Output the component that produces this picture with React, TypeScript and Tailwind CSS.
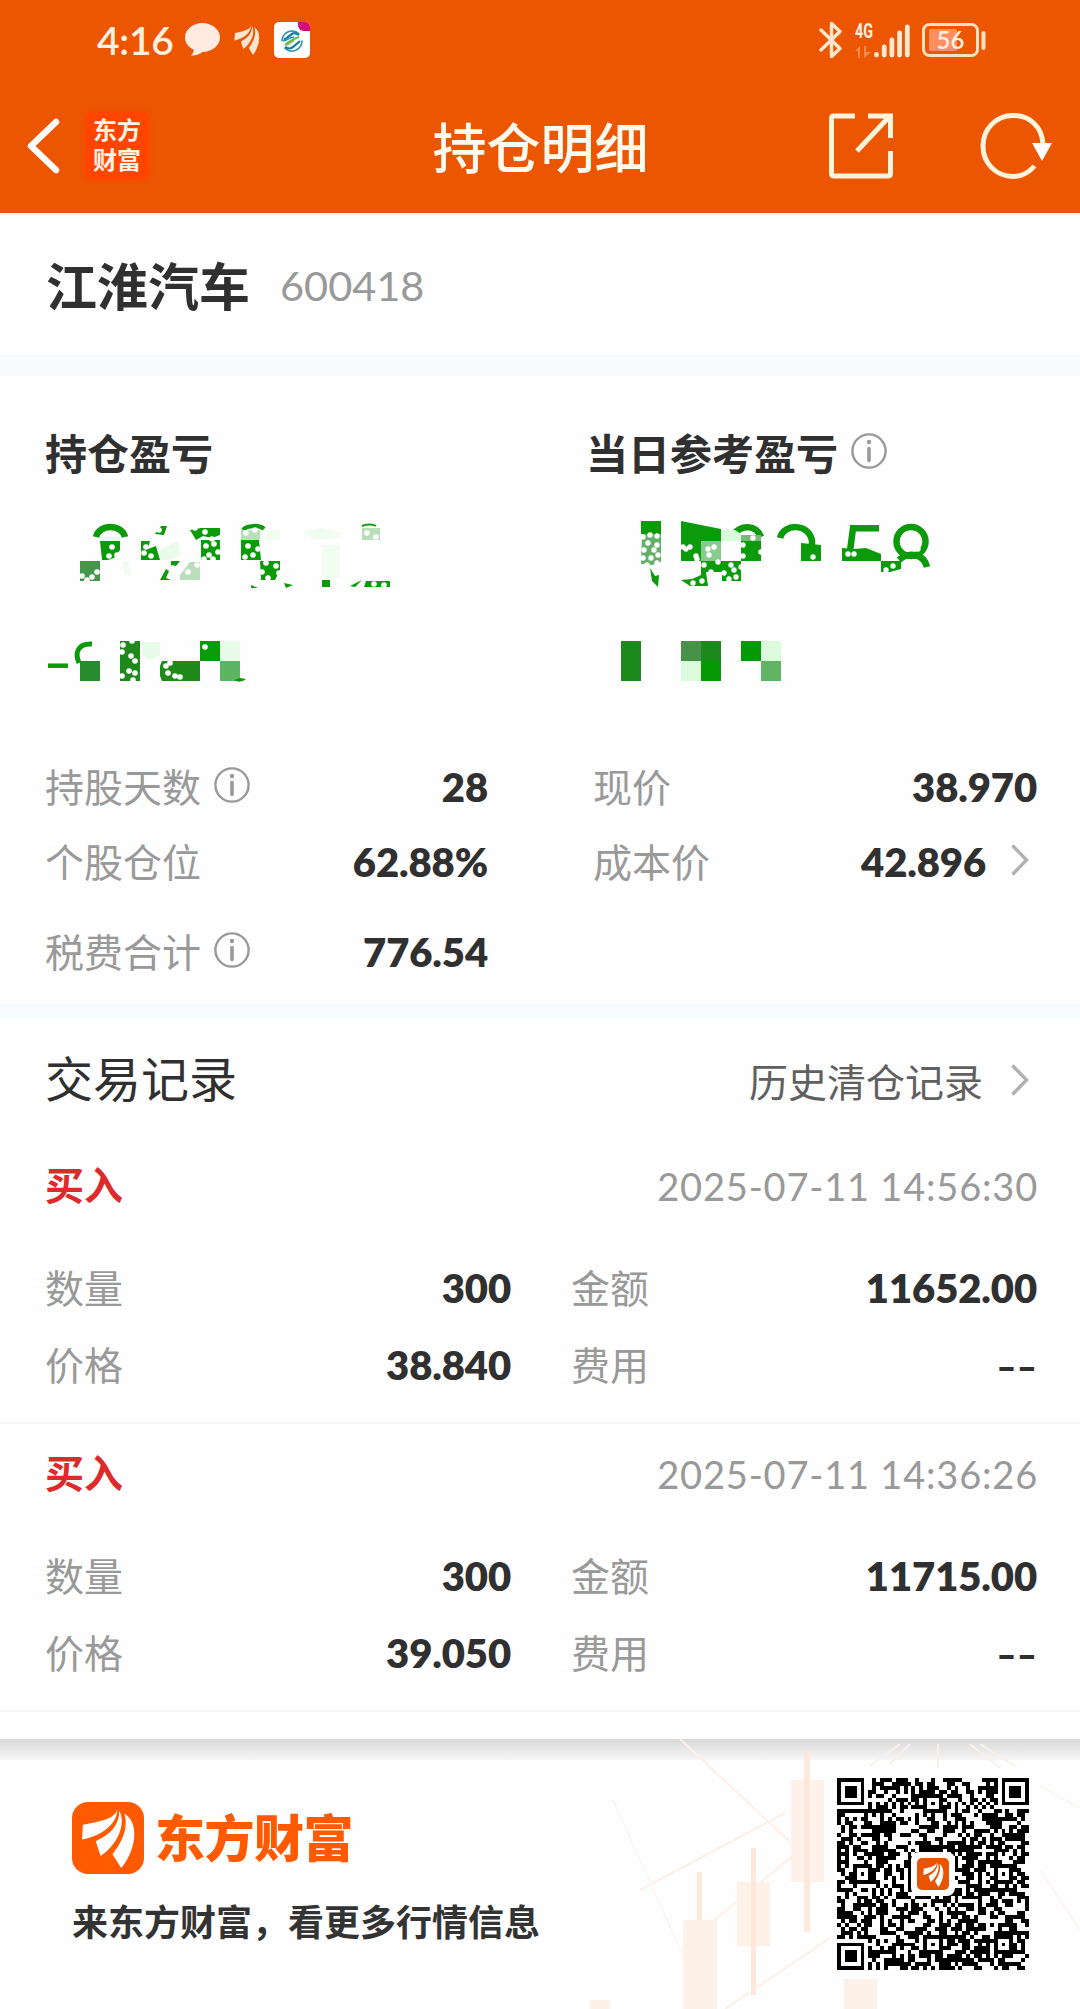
const N = 49;

function buildModules(): boolean[][] {
  let seed = 20250711;
  const rand = () => {
    seed = (seed * 1664525 + 1013904223) >>> 0;
    return seed / 4294967296;
  };
  const m: boolean[][] = Array.from({ length: N }, () => Array.from({ length: N }, () => rand() < 0.53));
  const ring = (cx: number, cy: number, size: number) => {
    for (let y = cy - size; y <= cy + size; y++)
      for (let x = cx - size; x <= cx + size; x++) {
        if (x < 0 || y < 0 || x >= N || y >= N) continue;
        const d = Math.max(Math.abs(x - cx), Math.abs(y - cy));
        m[y][x] = size === 4 ? d !== 4 && d !== 2 : d !== 1;
      }
  };
  for (let i = 8; i < N - 8; i++) {
    m[6][i] = i % 2 === 0;
    m[i][6] = i % 2 === 0;
  }
  for (const [x, y] of [[24, 6], [6, 24], [42, 24], [24, 42], [42, 42]]) ring(x, y, 2);
  for (const [x, y] of [[3, 3], [45, 3], [3, 45]]) ring(x, y, 4);
  return m;
}

const modules = buildModules();
const qrPath = modules
  .map((row, y) => row.map((on, x) => (on ? `M${x} ${y}h1v1h-1z` : "")).join(""))
  .join("");

function Mark({ className, fill }: { className: string; fill: string }) {
  return (
    <svg viewBox="0 0 56 64" className={className} fill={fill} preserveAspectRatio="none">
      <path d="M37 0C35 9 25 13 2 17L1 33C22 29 37 16 37 0Z" />
      <path d="M39 2C39 17 31 27 15 35L20 51C35 41 47 18 39 2Z" />
      <path d="M44 5C49 21 41 37 32 49L41 64C56 45 60 15 44 5Z" />
    </svg>
  );
}

function Info() {
  return (
    <svg viewBox="0 0 36 36" className="size-9 shrink-0" fill="none" stroke="#999">
      <circle cx="18" cy="18" r="16.6" strokeWidth="2.4" />
      <path d="M18 15.5V27.5" strokeWidth="3.6" strokeLinecap="round" />
      <circle cx="18" cy="9" r="2.2" fill="#999" stroke="none" />
    </svg>
  );
}

function Chevron() {
  return (
    <svg viewBox="0 0 18 32" className="h-8 w-[18px] shrink-0" fill="none" stroke="#b0b0b0" strokeWidth="3.4">
      <path d="M1.5 1.5L15.5 16L1.5 30.5" />
    </svg>
  );
}

function StatusBar() {
  return (
    <div className="flex h-20 items-center justify-between pl-[97px] pr-[94px]">
      <div className="flex items-center">
        <span className="w-[79px] font-['Lato',sans-serif] text-[39px] font-semibold leading-none tracking-[-0.3px] text-[#fff0e0]">4:16</span>
        <svg viewBox="0 0 35 34" className="ml-[9px] h-[34px] w-[35px]" fill="#ffebe0">
          <path d="M17.500 0C27 0 35 6.500 35 14.500S27 29 17.500 29C15 31.500 10 33 5.500 32.500C8 31 9 28.500 8.500 26.500C3 24 0 19.500 0 14.500C0 6.500 8 0 17.500 0Z" />
        </svg>
        <Mark className="ml-[14px] h-[30px] w-[26px]" fill="#ffe5cf" />
        <div className="relative ml-[14px] flex h-9 w-9 items-center justify-center overflow-hidden rounded-[5px] bg-white">
          <svg viewBox="0 0 24 24" className="mt-0.5 size-6" fill="none" strokeWidth="2.2">
            <circle cx="12" cy="12" r="10" stroke="#2b91ad" strokeWidth="1.500" strokeDasharray="24 7" />
            <path d="M4 11L12 5C14 3.500 16 4 19 6" stroke="#167fa8" />
            <path d="M5 16L9 13C12 11 15 9 19 8M5 16C8 15 11 13 14 11" stroke="#79b84a" />
            <path d="M5 18C9 20 10 20 13 18L20 12" stroke="#167fa8" />
            <path d="M3 12C8 12 9 8 14 8" stroke="#2b91ad" strokeWidth="1.500" />
          </svg>
          <div className="absolute right-0 top-0 h-[9px] w-3 rounded-bl-md bg-[#d80a7c]" />
        </div>
      </div>
      <div className="flex items-center">
        <svg viewBox="0 0 24 38" className="h-[38px] w-6" fill="none" stroke="#ffe8cf" strokeWidth="3.4" strokeLinejoin="round" strokeLinecap="round">
          <path d="M2 9L21 27.500L12.500 35.500V2.500L21 10.500L2 29" />
        </svg>
        <div className="ml-3 flex h-9 items-end">
          <div className="flex h-full w-[19px] flex-col justify-between">
            <svg viewBox="0 0 19 18" className="h-[18px] w-[19px] overflow-visible">
              <text x="0" y="15.500" textLength="18" lengthAdjust="spacingAndGlyphs" fill="#fff0e0" fontFamily="Roboto, sans-serif" fontWeight="700" fontSize="19.500">4G</text>
            </svg>
            <svg viewBox="0 0 16 12" className="h-3 w-4" fill="#ff8a4f">
              <path d="M5 0V12H3V5H0ZM9 0V12L16 6H11V0Z" />
            </svg>
          </div>
          <svg viewBox="0 0 36 34" className="h-[34px] w-9" stroke="#ffe8cf" strokeWidth="4.800" strokeLinecap="round">
            <path d="M2.500 30.500V31M10.200 23V31M17.900 16V31M25.600 9V31M33.300 3V31" />
          </svg>
        </div>
        <svg viewBox="0 0 64 34" className="ml-3 h-[34px] w-16" fill="none">
          <rect x="1.500" y="1.500" width="54" height="31" rx="6" stroke="#ffe0c0" strokeWidth="3" />
          <rect x="7" y="6" width="28" height="22" rx="2" fill="#ff8f60" />
          <path d="M61.500 10V25" stroke="#ffe0c0" strokeWidth="4" strokeLinecap="round" />
          <text x="28.500" y="26" textAnchor="middle" fill="#fff0e0" fontFamily="Lato, sans-serif" fontWeight="600" fontSize="24">56</text>
        </svg>
      </div>
    </div>
  );
}

function NavBar() {
  return (
    <div className="grid h-[133px] grid-cols-3 items-center">
      <div className="-mt-0.5 flex items-center pl-[27px]">
        <svg viewBox="0 0 33 56" className="h-14 w-[33px]" fill="none" stroke="#fff" strokeWidth="6.500" strokeLinecap="round" strokeLinejoin="round">
          <path d="M29 4L4 28L29 52" />
        </svg>
        <div className="ml-[25px] flex h-[68px] w-16 items-center justify-center rounded-lg bg-[#ff4500] shadow-[0_0_4px_#ff4500]">
          <span className="-mt-[3px] w-12 text-[24px] font-bold leading-[30px] text-[#fff3ea]">东方<br />财富</span>
        </div>
      </div>
      <h1 className="-mt-0.5 pl-px text-center text-[54px] font-medium leading-none text-[#fffaf0]">持仓明细</h1>
      <div className="-mt-0.5 flex items-center justify-end pr-[28px]">
        <svg viewBox="0 0 64 66" className="h-[66px] w-16" fill="none" stroke="#fff3dc" strokeWidth="5">
          <path d="M26 3H5Q2.500 3 2.500 5.500V60.500Q2.500 63 5 63H59Q61.500 63 61.500 60.500V38M39 3H61.500V25M60 4L28 38" />
        </svg>
        <svg viewBox="0 0 72 68" className="ml-[87px] h-[68px] w-[72px]" fill="none" stroke="#fff3dc" strokeWidth="5">
          <path d="M63 32C62 14 49 3.500 33 3.500C16 3.500 3 17 3 34C3 51 16 64.500 33 64.500C42 64.500 49 60.500 54.500 54" />
          <path d="M52 31H72L62 49Z" fill="#fff" stroke="none" />
        </svg>
      </div>
    </div>
  );
}

const G = "#0a9a0a";

function MaskedTotal() {
  return (
    <svg viewBox="30 500 400 200" className="h-[200px] w-[400px]">
      <g fill="none" stroke={G} strokeWidth="6.500">
        <path d="M96 537C99 523.500 122 523.500 125 537" />
        <path d="M243 530C247 525 260 525 264 529" strokeWidth="4.500" />
        <path d="M362 526C366 524 373 524 376 526" strokeWidth="2" />
        <path d="M48 665.700H68" strokeWidth="4.500" />
        <path d="M79 663C74 652 79 643 92 644" strokeWidth="5" />
      </g>
      <g fill={G}>
        <path d="M100 541H120V550L114 558L108 560H102ZM201 540H220V560H201ZM241 540H259L261 560H241ZM260 561H280V570L275 580H261ZM141 541H150L148 549L156 546L160 560H141ZM155 534L161 526H167L164 535ZM190 530L201 528H220V535L212 538L203 536L196 540ZM171 561H180L176 566L171 565ZM160 580L166 569L169 571L166 578L171 580Z" />
        <path d="M251 585L258 588H251ZM284 583L293 585L286 588ZM322 580H330V587H322ZM350 586L362 580L355 587ZM366 581H390V587H364Z" />
        <path d="M200 641H220V661H200Z" />
      </g>
      <path d="M80 561H100V581H80Z" fill="#45954a" />
      <path d="M80 661H100V681H80Z" fill="#278a2c" />
      <path d="M120 641H140V681H120ZM162 661H200V681H162L160 676V666Z" fill="#1f8a1b" />
      <path d="M220 661H240V681H220Z" fill="#5db462" />
      <path d="M234 680Q240 684 246 679L240 678Z" fill={G} />
      <g fill="#b9dfba">
        <path d="M241 530H260V540H241ZM362 528H380V540H362ZM180 575L190 562H200V580H180Z" />
      </g>
      <g fill="#e9fbe9">
        <path d="M100 537H120V541H100ZM160 550L178 541L180 556L168 560H160ZM220 641H240V661H220ZM142 642H160V656L150 660L142 655Z" />
      </g>
      <g fill="#f2fdf2">
        <path d="M265 530H280V540H265ZM302 532L320 528L340 532V538L315 540ZM322 545H340V578H322ZM122 562H130V576L124 574Z" />
      </g>
      <g fill="#fff">
        {[[112, 547], [117, 555], [109, 556], [82, 576], [92, 577], [97, 572], [87, 580], [146, 547], [151, 556], [144, 553], [159, 530], [195, 528], [205, 532], [212, 539], [206, 546], [214, 544], [209, 555], [218, 552], [204, 559], [213, 559], [248, 546], [253, 555], [245, 557], [258, 549], [266, 563], [276, 566], [268, 578], [279, 573], [262, 572], [188, 572], [197, 565], [182, 566], [246, 533], [255, 530], [367, 533], [376, 537], [123, 645], [132, 641], [122, 652], [131, 656], [135, 661], [129, 671], [135, 673], [122, 676], [133, 680], [166, 666], [168, 673], [170, 663], [175, 676], [180, 677], [205, 647], [374, 584], [384, 585]].map(([x, y], i) => (
          <circle key={i} cx={x} cy={y} r={2.800} />
        ))}
      </g>
    </svg>
  );
}

function MaskedDay() {
  return (
    <svg viewBox="560 500 400 200" className="h-[200px] w-[400px]">
      <g fill={G}>
        <path d="M641 521H661V534H641ZM681 521L721 529V541H701V561H681ZM741 541H761V561H741ZM801 543L821 545V561H801ZM842 548L854 549L866 548L881 554V561H842ZM701 561H741V581H722V572H706L708 586H690L681 580L692 579L701 575ZM881 561H901V569L890 572L881 572Z" />
        <path d="M642 534H661V562L652 565L641 564Z" fill="#65b068" />
        <path d="M650 568L655 576L659 575L658 587L652 581Z" />
      </g>
      <g fill="none" stroke={G} strokeWidth="6.500">
        <path d="M734 534C741 525 756 524 761 537M780 538C784 523 809 523 812 541V548M879 528.300H853L850 551" />
        <circle cx="911" cy="541.500" r="14.500" />
        <path d="M899 560C909 551 924 554 927 567" />
      </g>
      <path d="M721 530L735 530L741 534V541H721Z" fill="#d9ffda" />
      <path d="M701 541H721V561H701Z" fill="#8acb8d" />
      <path d="M741 535H761V541H741Z" fill="#78b87b" />
      <g fill="#fff">
        {[[643, 537], [650, 535], [657, 536], [648, 543], [657, 545], [644, 550], [654, 550], [643, 558], [651, 558], [658, 555], [647, 565], [657, 563], [683, 547], [690, 547], [686, 549], [696, 556], [697, 559], [708, 549], [714, 547], [709, 555], [688, 567], [696, 574], [704, 565], [711, 572], [718, 562], [724, 573], [731, 565], [736, 577], [741, 567], [729, 579], [693, 583], [702, 581], [715, 580], [734, 570], [743, 545], [743, 556], [761, 552], [753, 538], [813, 557], [848, 554], [854, 554], [918, 549], [886, 570], [893, 566], [899, 575], [887, 577]].map(([x, y], i) => (
          <circle key={i} cx={x} cy={y} r={2.700} />
        ))}
      </g>
      <path d="M621 641H641V681H621Z" fill="#1b891b" />
      <path d="M681 641H701V661H681Z" fill="#469249" />
      <path d="M701 641H721V661H701Z" fill="#1b891b" />
      <path d="M681 661H701V681H681ZM761 641H781V661H761Z" fill="#dcfbdc" />
      <path d="M701 661H721V681H701ZM741 641H761V661H741Z" fill="#059905" />
      <path d="M761 661H781V681H761Z" fill="#60b463" />
    </svg>
  );
}

function Label({ text, info }: { text: string; info?: boolean }) {
  return (
    <div className="-mt-[3px] flex items-center text-[39px] leading-none text-[#999]">
      <span>{text}</span>
      {info && <span className="-mt-px ml-[13px]"><Info /></span>}
    </div>
  );
}

function Value({ text }: { text: string }) {
  const empty = text === "--";
  return (
    <span
      className={
        empty
          ? "mt-1 origin-right scale-x-[1.4] font-['Lato',sans-serif] text-[39px] font-bold leading-none text-[#303030]"
          : "mt-px font-['Lato',sans-serif] text-[40px] font-extrabold leading-none tracking-[-0.1px] text-[#303030]"
      }
    >
      {text}
    </span>
  );
}

function Stats() {
  return (
    <div className="flex flex-col pt-[49px]">
      <div className="flex h-[75px] items-center">
        <div className="flex w-[443px] items-center justify-between"><Label text="持股天数" info /><Value text="28" /></div>
        <div className="ml-[105px] flex flex-1 items-center justify-between"><Label text="现价" /><Value text="38.970" /></div>
      </div>
      <div className="flex h-[75px] items-center">
        <div className="flex w-[443px] items-center justify-between"><Label text="个股仓位" /><Value text="62.88%" /></div>
        <div className="ml-[105px] flex flex-1 items-center justify-between">
          <Label text="成本价" />
          <div className="flex items-center gap-[25px] pr-2"><Value text="42.896" /><span className="-mt-[3px]"><Chevron /></span></div>
        </div>
      </div>
      <div className="mt-[15px] flex h-[75px] w-[443px] items-center justify-between"><Label text="税费合计" info /><Value text="776.54" /></div>
    </div>
  );
}

type Trade = { time: string; qty: string; amount: string; price: string };

const trades: Trade[] = [
  { time: "2025-07-11 14:56:30", qty: "300", amount: "11652.00", price: "38.840" },
  { time: "2025-07-11 14:36:26", qty: "300", amount: "11715.00", price: "39.050" },
];

function TradeItem({ trade }: { trade: Trade }) {
  const rows = [
    ["数量", trade.qty, "金额", trade.amount],
    ["价格", trade.price, "费用", "--"],
  ];
  return (
    <li className="h-[288px] border-b-2 border-[#f8f8fb] pl-[45px] pr-[43px] pt-[13px]">
      <div className="flex h-[72px] items-center justify-between">
        <span className="-mt-1 text-[39px] font-bold leading-none text-[#dd2b2b]">买入</span>
        <time className="-mr-px mt-px font-['Lato',sans-serif] text-[38px] leading-none tracking-[0.8px] text-[#999]">{trade.time}</time>
      </div>
      <div className="mt-[28px]">
        {rows.map(([a, b, c, d]) => (
          <div key={a} className="flex h-[77px] items-center">
            <div className="flex w-[466px] items-center justify-between"><Label text={a} /><Value text={b} /></div>
            <div className="ml-[60px] flex flex-1 items-center justify-between"><Label text={c} /><Value text={d} /></div>
          </div>
        ))}
      </div>
    </li>
  );
}

function Candles() {
  return (
    <svg viewBox="540 1739 540 270" className="absolute right-0 top-0 h-[270px] w-[540px]">
      <g fill="none" stroke="#fdf0e8" strokeWidth="2">
        <path d="M680 1739L790 1842M640 1890L785 1813M690 1940L800 1850M725 2009L830 1938" />
        <path d="M613 1800L685 1960M1040 1786L1080 1808M1040 1870L1080 1930" stroke="#fcf7f4" />
        <path d="M900 1744L870 1766M910 1744L890 1764M938 1744V1768M970 1744L1000 1768M980 1744L1015 1766" stroke="#f8f1ea" />
      </g>
      <g fill="#fef1e8">
        <path d="M791 1780H824V1882H791ZM737 1882H770V1946H737ZM683 1920H717V2009H683ZM844 1979H877V2009H844ZM590 2000H610V2009H590Z" />
        <path d="M804 1751H810V1932H804ZM751 1848H756V1995H751ZM697 1872H702V1920H697Z" fill="#fee8dc" />
      </g>
    </svg>
  );
}

function QrCode() {
  return (
    <div className="relative flex size-48 items-center justify-center bg-white">
      <svg viewBox="0 0 49 49" className="size-48" shapeRendering="crispEdges"><path d={qrPath} fill="#000" /></svg>
      <div className="absolute flex size-11 items-center justify-center rounded-lg bg-white">
        <div className="flex size-8 items-center justify-center rounded-[5px] bg-[#e85400]"><Mark className="h-[25px] w-[21px]" fill="#fff" /></div>
      </div>
    </div>
  );
}

export default function App() {
  return (
    <div className="flex h-[2009px] w-[1080px] flex-col overflow-hidden bg-[#fefefe] font-['Noto_Sans_CJK_SC',sans-serif] text-[#303030]">
      <header className="h-[213px] bg-[#ec5600]">
        <StatusBar />
        <NavBar />
      </header>
      <section className="flex h-[142px] items-center pl-[46px]">
        <h2 className="text-[51px] font-bold leading-none">江淮汽车</h2>
        <span className="ml-[30px] mt-[3px] font-['Lato',sans-serif] text-[41.5px] leading-none text-[#999]">600418</span>
      </section>
      <div className="h-[21px] bg-[#f8fafe]" />
      <section className="h-[628px] pl-[45px] pr-[43px]">
        <div className="flex h-[124px] items-center pt-[27px] text-[42px] font-bold leading-none">
          <span className="w-[541px]">持仓盈亏</span>
          <span>当日参考盈亏</span>
          <span className="-mt-px ml-[13px]"><Info /></span>
        </div>
        <div className="-ml-[15px] flex gap-[130px]"><MaskedTotal /><MaskedDay /></div>
        <Stats />
      </section>
      <div className="h-[15px] bg-[#f8fbff]" />
      <section>
        <div className="flex h-[117px] items-center justify-between pl-[45px] pr-[51px]">
          <h3 className="-mt-1 text-[48px] leading-none">交易记录</h3>
          <div className="flex items-center gap-[28px] pt-[5px] text-[39px] leading-none text-[#606060]"><span>历史清仓记录</span><Chevron /></div>
        </div>
        <ul>{trades.map((t) => <TradeItem key={t.time} trade={t} />)}</ul>
      </section>
      <footer className="relative mt-auto h-[270px] shrink-0">
        <div className="h-[21px] bg-linear-to-b from-[#d9d9d9] to-[#f6f6f6]" />
        <Candles />
        <div className="relative flex justify-between pl-[72px] pr-[51px] pt-[18px]">
          <div className="pt-6">
            <div className="flex items-center">
              <div className="flex size-[72px] items-center justify-center rounded-2xl bg-[#ff5a00]"><Mark className="h-[59px] w-[55px]" fill="#fff" /></div>
              <span className="-mt-[7px] ml-[11px] text-[50px] font-black leading-none tracking-[-0.5px] text-[#ff5a00]">东方财富</span>
            </div>
            <p className="mt-[28px] text-[36px] font-bold leading-none text-[#333]">来东方财富，看更多行情信息</p>
          </div>
          <QrCode />
        </div>
      </footer>
    </div>
  );
}
